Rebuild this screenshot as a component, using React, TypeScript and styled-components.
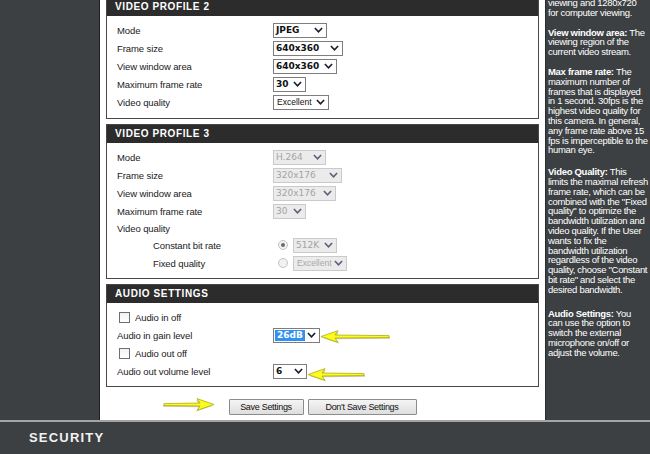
import React from "react";
import styled, { createGlobalStyle, css } from "styled-components";

const GlobalStyle = createGlobalStyle`
  html, body { margin: 0; padding: 0; }
  body {
    width: 650px; height: 454px; overflow: hidden;
    background: #3d4042;
    font-family: "Liberation Sans", Arial, sans-serif;
  }
`;

const Page = styled.div`
  width: 650px;
  height: 454px;
  display: flex;
  flex-direction: column;
  overflow: hidden;
`;

const Top = styled.div`
  display: flex;
  height: 420px;
  overflow: hidden;
  flex: none;
`;

const LeftNav = styled.nav`
  width: 99px;
  flex: none;
  background: #3d4042;
  border-right: 1px solid #1e1f20;
`;

const Main = styled.main`
  width: 445px;
  flex: none;
  background: #fff;
  padding: 0 6px;
  box-sizing: border-box;
  display: flex;
  flex-direction: column;
  gap: 5px;
`;

const Sidebar = styled.aside`
  width: 104px;
  flex: none;
  background: #3d4042;
  border-left: 1px solid #2a2c2e;
  color: #fff;
  padding-left: 2px;
  font-family: "Liberation Sans", Arial, sans-serif;
  font-size: 9.5px;
  letter-spacing: -0.3px;
  line-height: 9.8px;
  white-space: nowrap;
  overflow: hidden;
`;

const HelpPara = styled.p<{ $mt: number }>`
  margin: ${(p) => p.$mt}px 0 0 0;
`;

const HelpTitle = styled.b`
  font-weight: bold;
  color: #fff;
`;

const Footer = styled.footer`
  height: 32px;
  flex: none;
  border-top: 2px solid #a4a4a4;
  background: #3d4042;
  display: flex;
  align-items: center;
  padding-left: 29px;
`;

const Brand = styled.span`
  font-family: "Liberation Sans", Arial, sans-serif;
  font-weight: bold;
  font-size: 13px;
  letter-spacing: 1.2px;
  color: #f2f2f2;
  margin-top: -2px;
`;

const Section = styled.section<{ $first?: boolean }>`
  border: 1px solid #474747;
  background: #fff;
  flex: none;
  ${(p) =>
    p.$first &&
    css`
      margin-top: -3px;
    `}
`;

const SectionHeader = styled.h2`
  margin: 0;
  height: 18px;
  background: #2c2c2c;
  color: #fff;
  font-family: "Liberation Sans", Arial, sans-serif;
  font-weight: bold;
  font-size: 10px;
  letter-spacing: 0.6px;
  line-height: 18px;
  padding-left: 8px;
`;

const SectionBody = styled.div<{ $bottom: number }>`
  padding: 5px 0 ${(p) => p.$bottom}px 10px;
  display: flex;
  flex-direction: column;
`;

const Row = styled.div<{ $h?: number }>`
  display: flex;
  align-items: center;
  height: ${(p) => p.$h ?? 18}px;
`;

const Label = styled.span<{ $indent?: boolean }>`
  width: 156px;
  flex: none;
  box-sizing: border-box;
  padding-left: ${(p) => (p.$indent ? 36 : 0)}px;
  font-size: 9.5px;
  letter-spacing: -0.1px;
  color: #1a1a1a;
`;

const Control = styled.div`
  display: flex;
  align-items: center;
`;

const CheckRow = styled.label`
  display: flex;
  align-items: center;
  gap: 5px;
  padding-left: 2px;
  font-size: 9.5px;
  letter-spacing: -0.1px;
  color: #1a1a1a;
`;

const CheckBox = styled.span`
  width: 11px;
  height: 11px;
  box-sizing: border-box;
  border: 1px solid #6e6e6e;
  background: linear-gradient(#f2f2f2, #ffffff);
  flex: none;
`;

const Radio = styled.span<{ $checked?: boolean }>`
  width: 10px;
  height: 10px;
  box-sizing: border-box;
  border-radius: 50%;
  border: 1px solid #c4c4c4;
  background: #f1f1f1;
  margin: 0 5px 0 5px;
  display: flex;
  align-items: center;
  justify-content: center;
  flex: none;
  &::after {
    content: "";
    width: 4px;
    height: 4px;
    border-radius: 50%;
    background: ${(p) => (p.$checked ? "#6b6b6b" : "transparent")};
  }
`;

const SelectBox = styled.div<{ $w: number; $disabled?: boolean }>`
  width: ${(p) => p.$w}px;
  height: 15px;
  box-sizing: border-box;
  border: 1px solid ${(p) => (p.$disabled ? "#cacaca" : "#7d7d7d")};
  background: ${(p) => (p.$disabled ? "#ebebeb" : "#fff")};
  display: flex;
  align-items: center;
  justify-content: space-between;
  padding: 0 3px 0 2px;
  flex: none;
`;

type Variant = "bold" | "small" | "disabled" | "disabledSmall" | "highlight";

const SelectValue = styled.span<{ $variant: Variant }>`
  white-space: nowrap;
  ${(p) => {
    switch (p.$variant) {
      case "bold":
        return css`
          font-family: "DejaVu Sans", Verdana, sans-serif;
          font-weight: bold;
          font-size: 9px;
          color: #111;
        `;
      case "highlight":
        return css`
          font-family: "DejaVu Sans", Verdana, sans-serif;
          font-weight: bold;
          font-size: 9px;
          color: #fff;
          background: #3191f0;
          padding: 0 2px;
          margin-left: -1px;
          line-height: 11px;
        `;
      case "small":
        return css`
          font-family: "Liberation Sans", Arial, sans-serif;
          font-size: 8.5px;
          color: #111;
          padding-left: 1px;
        `;
      case "disabled":
        return css`
          font-family: "DejaVu Sans", Verdana, sans-serif;
          font-size: 9px;
          color: #a3a3a3;
        `;
      case "disabledSmall":
        return css`
          font-family: "Liberation Sans", Arial, sans-serif;
          font-size: 8.5px;
          color: #a8a8a8;
          padding-left: 1px;
        `;
    }
  }}
`;

const Chevron = ({ color }: { color: string }) => (
  <svg width="9" height="6" viewBox="0 0 9 6" style={{ flex: "none" }}>
    <polyline points="0.9,1 4.5,4.8 8.1,1" fill="none" stroke={color} strokeWidth="1.6" />
  </svg>
);

const Select = ({ value, w, variant = "bold", disabled }: { value: string; w: number; variant?: Variant; disabled?: boolean }) => (
  <SelectBox $w={w} $disabled={disabled}>
    <SelectValue $variant={variant}>{value}</SelectValue>
    <Chevron color={disabled ? "#5a6275" : "#1c1c30"} />
  </SelectBox>
);

const ArrowSvg = styled.svg<{ $ml?: number; $mt?: number }>`
  flex: none;
  margin-left: ${(p) => p.$ml ?? 0}px;
  margin-top: ${(p) => p.$mt ?? 0}px;
  overflow: visible;
`;

const YellowArrow = ({ len, ml, mt, flip }: { len: number; ml?: number; mt?: number; flip?: boolean }) => {
  const d = `M0,6.5 L17,0.6 L14,5 L${len},5.6 L${len},7.6 L14,8 L17,12.4 Z`;
  return (
    <ArrowSvg width={len} height="13" viewBox={`0 0 ${len} 13`} $ml={ml} $mt={mt}>
      <g transform={flip ? `translate(${len},0) scale(-1,1)` : undefined}>
        <path d={d} transform="translate(1,1.2)" fill="rgba(110,110,60,0.35)" />
        <path d={d} fill="#fbfb1e" stroke="#a7a400" strokeWidth="0.7" strokeLinejoin="round" />
      </g>
    </ArrowSvg>
  );
};

const ButtonBar = styled.div`
  display: flex;
  justify-content: center;
  margin-top: 7px;
`;

const ButtonGroup = styled.div`
  position: relative;
  display: flex;
  gap: 4px;
`;

const ArrowOverlay = styled.div`
  position: absolute;
  right: calc(100% + 15px);
  top: -1px;
  display: flex;
`;

const Button = styled.button<{ $w: number }>`
  width: ${(p) => p.$w}px;
  height: 16px;
  box-sizing: border-box;
  border: 1px solid #8c8c8c;
  border-radius: 1px;
  background: linear-gradient(#f5f5f5, #dedede);
  font-family: "Liberation Sans", Arial, sans-serif;
  font-size: 9px;
  letter-spacing: -0.3px;
  color: #111;
  padding: 0;
  line-height: 14px;
  text-align: center;
`;

export default function App() {
  return (
    <Page>
      <GlobalStyle />
      <Top>
        <LeftNav />
        <Main>
          <Section $first>
            <SectionHeader>VIDEO PROFILE 2</SectionHeader>
            <SectionBody $bottom={7}>
              <Row>
                <Label>Mode</Label>
                <Control><Select value="JPEG" w={54} /></Control>
              </Row>
              <Row>
                <Label>Frame size</Label>
                <Control><Select value="640x360" w={70} /></Control>
              </Row>
              <Row>
                <Label>View window area</Label>
                <Control><Select value="640x360" w={64} /></Control>
              </Row>
              <Row>
                <Label>Maximum frame rate</Label>
                <Control><Select value="30" w={33} /></Control>
              </Row>
              <Row>
                <Label>Video quality</Label>
                <Control><Select value="Excellent" w={56} variant="small" /></Control>
              </Row>
            </SectionBody>
          </Section>

          <Section>
            <SectionHeader>VIDEO PROFILE 3</SectionHeader>
            <SectionBody $bottom={6}>
              <Row>
                <Label>Mode</Label>
                <Control><Select value="H.264" w={53} variant="disabled" disabled /></Control>
              </Row>
              <Row>
                <Label>Frame size</Label>
                <Control><Select value="320x176" w={69} variant="disabled" disabled /></Control>
              </Row>
              <Row>
                <Label>View window area</Label>
                <Control><Select value="320x176" w={63} variant="disabled" disabled /></Control>
              </Row>
              <Row>
                <Label>Maximum frame rate</Label>
                <Control><Select value="30" w={33} variant="disabled" disabled /></Control>
              </Row>
              <Row $h={16}>
                <Label>Video quality</Label>
              </Row>
              <Row>
                <Label $indent>Constant bit rate</Label>
                <Control>
                  <Radio $checked />
                  <Select value="512K" w={44} variant="disabled" disabled />
                </Control>
              </Row>
              <Row>
                <Label $indent>Fixed quality</Label>
                <Control>
                  <Radio />
                  <Select value="Excellent" w={54} variant="disabledSmall" disabled />
                </Control>
              </Row>
            </SectionBody>
          </Section>

          <Section>
            <SectionHeader>AUDIO SETTINGS</SectionHeader>
            <SectionBody $bottom={6}>
              <Row>
                <CheckRow><CheckBox />Audio in off</CheckRow>
              </Row>
              <Row>
                <Label>Audio in gain level</Label>
                <Control>
                  <Select value="26dB" w={47} variant="highlight" />
                  <YellowArrow len={68} ml={1} mt={2} />
                </Control>
              </Row>
              <Row>
                <CheckRow><CheckBox />Audio out off</CheckRow>
              </Row>
              <Row>
                <Label>Audio out volume level</Label>
                <Control>
                  <Select value="6" w={34} />
                  <YellowArrow len={56} ml={1} mt={6} />
                </Control>
              </Row>
            </SectionBody>
          </Section>

          <ButtonBar>
            <ButtonGroup>
              <ArrowOverlay>
                <YellowArrow len={50} flip />
              </ArrowOverlay>
              <Button $w={75}>Save Settings</Button>
              <Button $w={109}>Don't Save Settings</Button>
            </ButtonGroup>
          </ButtonBar>
        </Main>
        <Sidebar>
          <HelpPara $mt={-2}>
            viewing and 1280x720<br />
            for computer viewing.
          </HelpPara>
          <HelpPara $mt={10}>
            <HelpTitle>View window area:</HelpTitle> The<br />
            viewing region of the<br />
            current video stream.
          </HelpPara>
          <HelpPara $mt={10}>
            <HelpTitle>Max frame rate:</HelpTitle> The<br />
            maximum number of<br />
            frames that is displayed<br />
            in 1 second. 30fps is the<br />
            highest video quality for<br />
            this camera. In general,<br />
            any frame rate above 15<br />
            fps is imperceptible to the<br />
            human eye.
          </HelpPara>
          <HelpPara $mt={12}>
            <HelpTitle>Video Quality:</HelpTitle> This<br />
            limits the maximal refresh<br />
            frame rate, which can be<br />
            combined with the "Fixed<br />
            quality" to optimize the<br />
            bandwidth utilization and<br />
            video quality. If the User<br />
            wants to fix the<br />
            bandwidth utilization<br />
            regardless of the video<br />
            quality, choose "Constant<br />
            bit rate" and select the<br />
            desired bandwidth.
          </HelpPara>
          <HelpPara $mt={14}>
            <HelpTitle>Audio Settings:</HelpTitle> You<br />
            can use the option to<br />
            switch the external<br />
            microphone on/off or<br />
            adjust the volume.
          </HelpPara>
        </Sidebar>
      </Top>
      <Footer>
        <Brand>SECURITY</Brand>
      </Footer>
    </Page>
  );
}
